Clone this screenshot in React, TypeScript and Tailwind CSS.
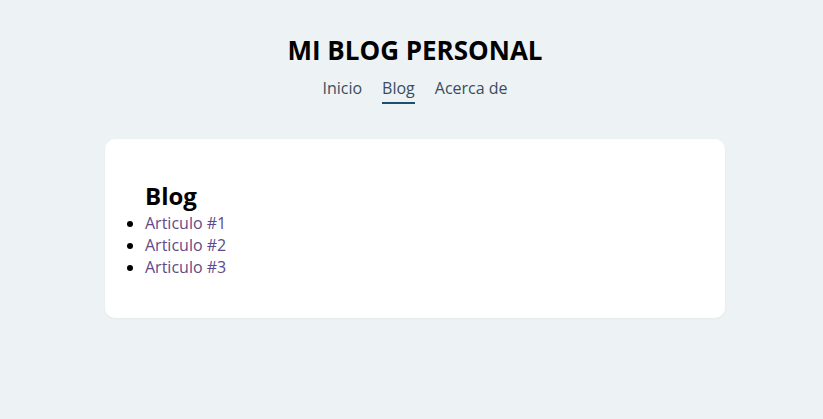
export default function App() {
  const articles = ["Articulo #1", "Articulo #2", "Articulo #3"];

  return (
    <div className="min-h-screen bg-[#edf2f5] pl-[7px] font-['Open_Sans',sans-serif] text-black">
      <header className="flex flex-col items-center pt-[32px]">
        <h1 className="text-[26px] font-bold leading-[36px]">MI BLOG PERSONAL</h1>
        <nav className="mt-[8px] flex gap-5 text-base text-[#3a4d60]">
          <a className="pb-[2px] border-b-2 border-transparent">Inicio</a>
          <a className="pb-[2px] border-b-2 border-[#1d4f6e]">Blog</a>
          <a className="pb-[2px] border-b-2 border-transparent">Acerca de</a>
        </nav>
      </header>
      <main className="mx-auto mt-[35px] w-[620px] rounded-[10px] bg-white px-10 pt-[41px] pb-10 shadow-[0_1px_3px_rgba(0,0,0,0.04)]">
        <h2 className="text-2xl font-bold leading-8">Blog</h2>
        <ul className="list-disc">
          {articles.map((a) => (
            <li key={a} className="leading-[22px]">
              <a className="text-[#5e4a8c]">{a}</a>
            </li>
          ))}
        </ul>
      </main>
    </div>
  );
}
